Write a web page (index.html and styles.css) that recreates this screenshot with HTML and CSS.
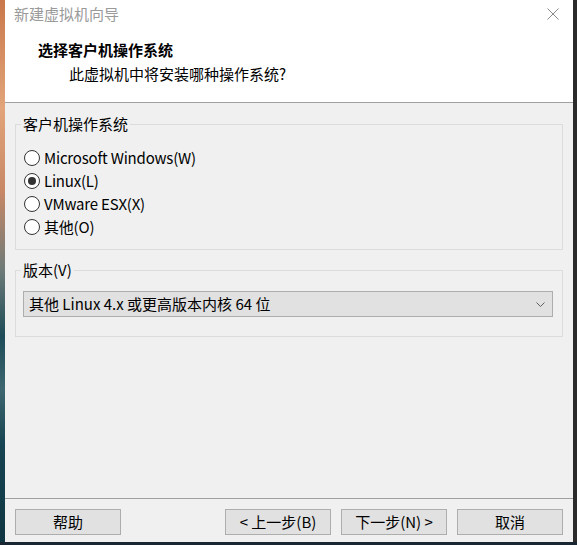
FILE: index.html
```html
<!DOCTYPE html>
<html lang="zh-CN">
<head>
<meta charset="utf-8">
<title>新建虚拟机向导</title>
<link rel="stylesheet" href="styles.css">
</head>
<body>
<div class="desktop">
  <div class="strip-left"></div>
  <div class="window">
    <div class="titlebar">
      <span class="title">新建虚拟机向导</span>
      <svg class="close" width="12" height="12" viewBox="0 0 12 12"><path d="M0.5 0.5 L11.5 11.5 M11.5 0.5 L0.5 11.5" stroke="#8a8a8a" stroke-width="1" fill="none"/></svg>
    </div>
    <div class="header">
      <div class="heading">选择客户机操作系统</div>
      <div class="subheading">此虚拟机中将安装哪种操作系统?</div>
    </div>
    <div class="content">
      <fieldset class="group group-os">
        <legend>客户机操作系统</legend>
        <div class="radios">
          <label class="radio"><span class="dot"></span>Microsoft Windows(W)</label>
          <label class="radio"><span class="dot checked"></span>Linux(L)</label>
          <label class="radio"><span class="dot"></span>VMware ESX(X)</label>
          <label class="radio"><span class="dot"></span>其他(O)</label>
        </div>
      </fieldset>
      <fieldset class="group group-ver">
        <legend>版本(V)</legend>
        <div class="select">
          <span>其他 Linux 4.x 或更高版本内核 64 位</span>
          <svg class="chev" width="9" height="5" viewBox="0 0 9 5"><path d="M0.5 0.5 L4.5 4.5 L8.5 0.5" stroke="#606060" stroke-width="1" fill="none"/></svg>
        </div>
      </fieldset>
    </div>
    <div class="footer">
      <button class="btn">帮助</button>
      <div class="spacer"></div>
      <button class="btn">&lt; 上一步(B)</button>
      <button class="btn">下一步(N) &gt;</button>
      <button class="btn">取消</button>
    </div>
  </div>
  <div class="strip-right"></div>
</div>
</body>
</html>
```
FILE: styles.css
```css
html, body {
  margin: 0;
  padding: 0;
  width: 577px;
  height: 545px;
  overflow: hidden;
  background: #1b2633;
}
.desktop {
  display: flex;
  height: 542px;
}
.strip-left {
  width: 5px;
  background: linear-gradient(#c9784a 0%, #e2a47a 20%, #c98866 35%, #6d7a78 50%, #1d4c58 62%, #3d6670 72%, #174452 82%, #0f3642 100%);
}
.strip-right {
  width: 4px;
  background: #2b2b2b;
}
.window {
  width: 568px;
  display: flex;
  flex-direction: column;
  background: #f0f0f0;
  font-family: "Noto Sans CJK SC", "Noto Sans", sans-serif;
  font-size: 15px;
  color: #000;
}
.titlebar {
  height: 30px;
  background: #fff;
  display: flex;
  align-items: center;
  justify-content: space-between;
  padding: 0 14px 0 9px;
}
.title {
  color: #9a9a9a;
  line-height: 20px;
  margin-top: -2px;
}
.close {
  margin-top: -3px;
}
.header {
  background: #fff;
  height: 73px;
  border-bottom: 1px solid #a0a0a0;
  padding-top: 10px;
  box-sizing: border-box;
}
.heading {
  font-weight: bold;
  line-height: 20px;
  padding-left: 33px;
}
.subheading {
  line-height: 20px;
  padding-left: 64px;
  margin-top: 4px;
}
.content {
  flex: 1;
  padding: 11px 10px 0 10px;
  display: flex;
  flex-direction: column;
  gap: 10px;
}
.group {
  margin: 0;
  border: 1px solid #dcdcdc;
  padding: 0;
  min-width: 0;
}
.group legend {
  margin-left: 5px;
  padding: 0 2px;
  line-height: 20px;
}
.radios {
  padding: 12px 0 11px 8px;
}
.radio {
  display: flex;
  align-items: center;
  height: 23px;
  line-height: 23px;
  letter-spacing: -0.2px;
}
.dot {
  width: 14px;
  height: 14px;
  border: 1px solid #333;
  border-radius: 50%;
  background: #fff;
  margin-right: 4px;
  display: flex;
  align-items: center;
  justify-content: center;
}
.dot.checked::after {
  content: "";
  width: 8px;
  height: 8px;
  border-radius: 50%;
  background: #333;
}
.select {
  margin: 11px 9px 19px 7px;
  height: 26px;
  box-sizing: border-box;
  border: 1px solid #adadad;
  background: #e1e1e1;
  display: flex;
  align-items: center;
  justify-content: space-between;
  padding: 0 6px 0 5px;
  line-height: 20px;
}
.chev {
  margin-right: 1px;
}
.footer {
  height: 44px;
  border-top: 1px solid #a0a0a0;
  display: flex;
  align-items: flex-start;
  gap: 10px;
  padding: 10px 10px 0 10px;
  box-sizing: border-box;
}
.spacer {
  flex: 1;
}
.btn {
  width: 106px;
  height: 26px;
  border: 1px solid #adadad;
  background: #e1e1e1;
  font-family: "Noto Sans CJK SC", "Noto Sans", sans-serif;
  font-size: 15px;
  color: #000;
  padding: 0;
  line-height: 20px;
}
```
